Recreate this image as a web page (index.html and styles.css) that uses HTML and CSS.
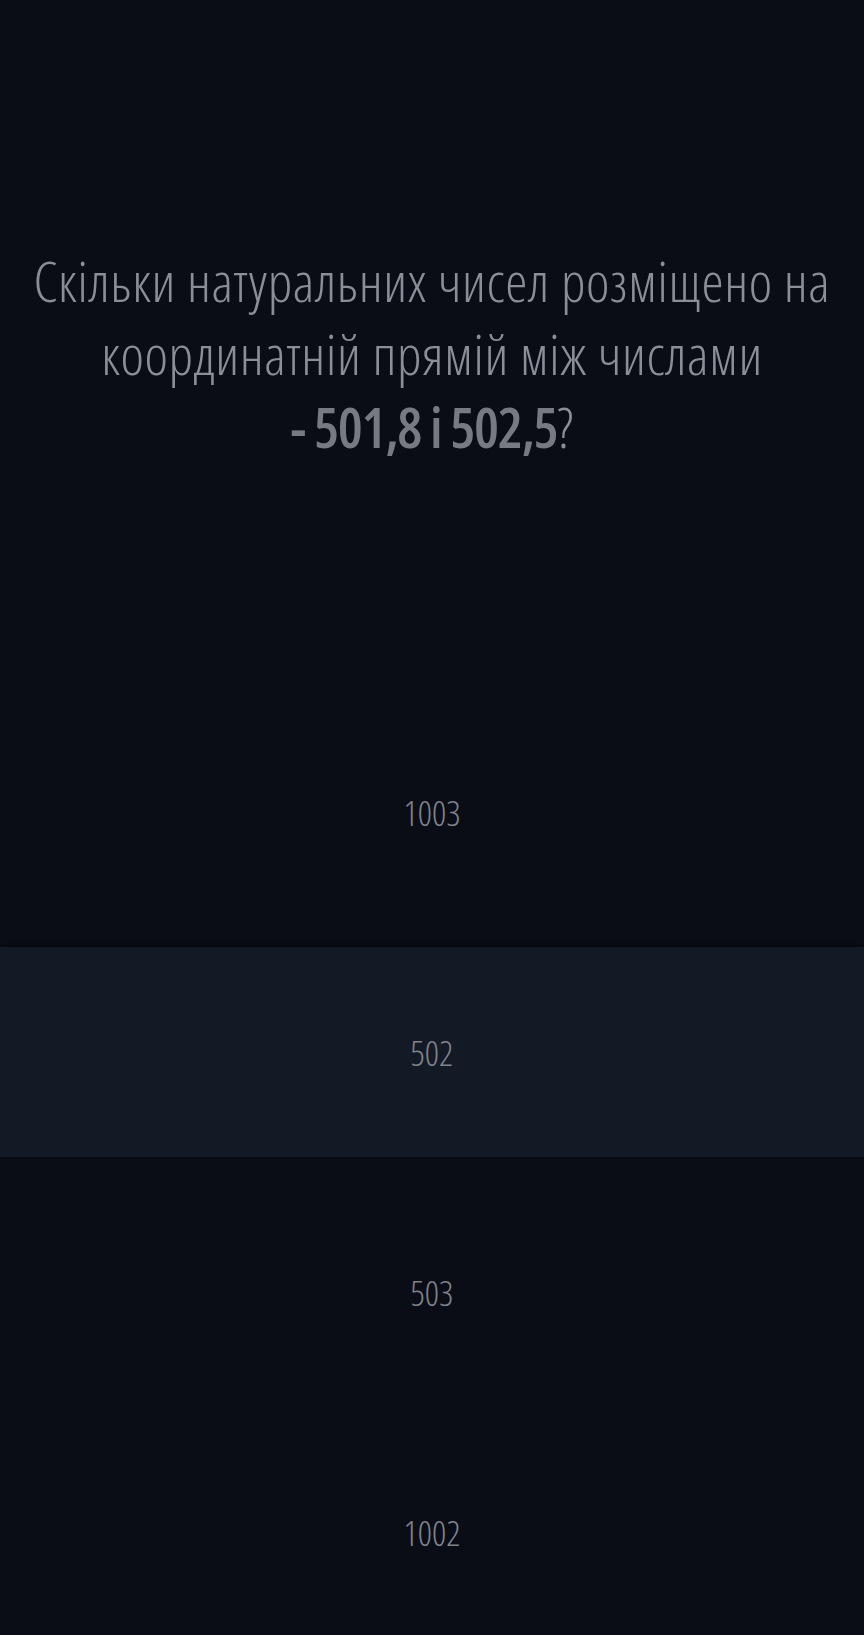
FILE: index.html
```html
<!DOCTYPE html>
<html lang="uk"><head><meta charset="utf-8"><link rel="stylesheet" href="styles.css"></head>
<body>
<main class="quiz">
  <h1 class="question">Скільки натуральних чисел розміщено на координатній прямій між числами <span class="tail"><strong class="num">- 501,8 і 502,5</strong>?</span></h1>
  <ul class="answers">
    <li class="answer">1003</li>
    <li class="answer selected">502</li>
    <li class="answer">503</li>
    <li class="answer">1002</li>
  </ul>
</main>
</body></html>
```
FILE: styles.css
```css
html,body{margin:0;padding:0}
body{background:#0a0d16;color:#8b8e97;font-family:"Open Sans","Noto Sans",sans-serif;font-stretch:condensed}
.quiz{display:flex;flex-direction:column;height:1635px;overflow:hidden}
.question{margin:244px 0 0;padding:0 26px;text-align:center;font-size:56px;line-height:73px;font-weight:300;letter-spacing:0.6px;color:#8b8e97}
.tail{white-space:nowrap}
.num{font-weight:600;color:#777a83;letter-spacing:-1.3px}
.answers{list-style:none;margin:244px 0 0;padding:0;display:flex;flex-direction:column;gap:30px}
.answer{height:210px;display:flex;align-items:center;justify-content:center;font-size:35px;font-weight:300;color:#80848d}
.selected{background:#141a25;box-shadow:0 -2px 3px rgba(0,0,0,0.4)}
```
